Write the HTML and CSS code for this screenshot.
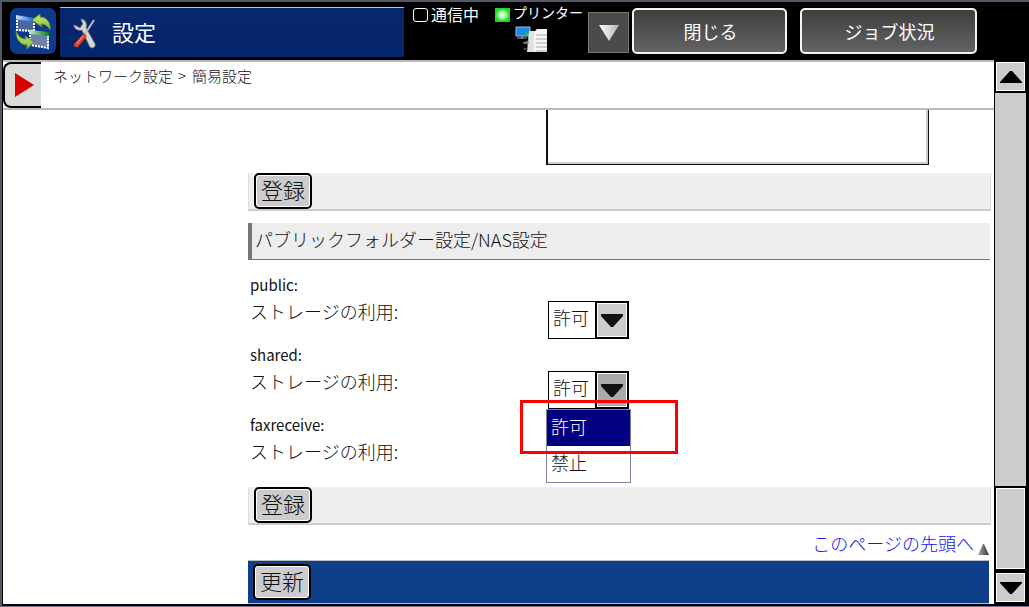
FILE: index.html
```
<!DOCTYPE html>
<html lang="ja">
<head>
    <meta charset="UTF-8">
    <meta name="viewport" content="width=device-width, initial-scale=1.0">
    <title>設定</title>
    <link rel="stylesheet" href="styles.css">
</head>
<body>
    <div class="screen">
        <header class="topbar">
            <div class="logo">
                <svg width="46" height="46" viewBox="0 0 46 46">
                    <defs>
                        <linearGradient id="leaf" x1="0" y1="0" x2="0" y2="1">
                            <stop offset="0" stop-color="#cfe87a"/>
                            <stop offset="1" stop-color="#86b83a"/>
                        </linearGradient>
                        <linearGradient id="blue-bar" x1="0" y1="0" x2="1" y2="0">
                            <stop offset="0" stop-color="#cfe2fb"/>
                            <stop offset="1" stop-color="#1a66dc"/>
                        </linearGradient>
                        <linearGradient id="green-bar" x1="0" y1="0" x2="1" y2="0">
                            <stop offset="0" stop-color="#c8e8cc"/>
                            <stop offset="1" stop-color="#0a7a22"/>
                        </linearGradient>
                    </defs>
                    <path d="M6 8l18 3v13L7 23z" fill="#4c66a0"/>
                    <path d="M7 12v10l17 1V12" fill="none" stroke="#fff" stroke-width="2" stroke-dasharray="2 1"/>
                    <path d="M6 7l18 3v4L6 11z" fill="url(#blue-bar)"/>
                    <path d="M20 24l19 2v14l-18-3z" fill="#6f82ae"/>
                    <path d="M20 27v10l18 3V27" fill="none" stroke="#fff" stroke-width="2" stroke-dasharray="2 1"/>
                    <path d="M19 22l20 2v4l-20-2z" fill="url(#green-bar)"/>
                    <path d="M22 12l8-6v3c7 0 11 6 10 13-2-4-5-6-9-6l1 3z" fill="url(#leaf)" stroke="#5b8f2a" stroke-width="1"/>
                    <path d="M6 23c2 5 5 8 10 8l-1-3 9 6-7 7v-4c-7 0-11-6-11-14z" fill="url(#leaf)" stroke="#5b8f2a" stroke-width="1"/>
                </svg>
            </div>
            <div class="title-bar">
                <svg width="24" height="32" viewBox="0 0 24 32">
                    <path d="M1 8c0 3 3 6 8 5l8 17c2 2 6 0 5-3L13 11c1-4 0-8-5-9l2 5-3 4z" fill="#d8d8d8" stroke="#888"/>
                    <path d="M21 3L12 17" stroke="#bbb" stroke-width="2"/>
                    <path d="M11 16l3 3-9 11c-2 1-5-1-4-3z" fill="#e0402c"/>
                    <path d="M10 19L4 27" stroke="#ff9d86"/>
                </svg>
                <h1>設定</h1>
            </div>
            <div class="status">
                <span class="lamp"></span>
                <span class="status-text">通信中</span>
            </div>
            <div class="printer">
                <div class="status">
                    <span class="lamp lamp-on"></span>
                    <span class="printer-text">プリンター</span>
                </div>
                <svg class="printer-icon" width="33" height="27" viewBox="0 0 33 27">
                    <rect x="1" y="1" width="14" height="9" fill="#188be5" stroke="#8dbde5"/>
                    <path d="M7 10v3M2 12h10" stroke="#aaa"/>
                    <path d="M9 6l2 1 3 1v4z" fill="#21d629"/>
                    <path d="M14 5h6v21h-8z" fill="#e2e2e6"/>
                    <path d="M8 17l5-2v3zM8 23h5" fill="#777" stroke="#777"/>
                    <path d="M19 6l3-3h10v23H19z" fill="#f5f5f5"/>
                    <path d="M21 9h11M21 13h11M21 17h11M21 21h11M21 25h11" stroke="#aaa"/>
                </svg>
            </div>
            <button class="drop-button" aria-label="メニュー">
                <svg width="20" height="16" viewBox="0 0 20 16">
                    <defs>
                        <linearGradient id="silver" x1="0" y1="0" x2="1" y2="0">
                            <stop offset="0" stop-color="#fff"/>
                            <stop offset="1" stop-color="#b4b4b4"/>
                        </linearGradient>
                    </defs>
                    <path d="M0 0h20L10 16z" fill="url(#silver)"/>
                </svg>
            </button>
            <button class="top-button close-button">閉じる</button>
            <button class="top-button job-button">ジョブ状況</button>
        </header>

        <div class="body">
            <main class="panel">
                <nav class="breadcrumb">
                    <button class="menu-toggle" aria-label="メニューを開く">
                        <svg width="19" height="24" viewBox="0 0 19 24"><path d="M0 0l19 12L0 24z" fill="#d90000"/></svg>
                    </button>
                    <p>ネットワーク設定<span class="separator">&gt;</span>簡易設定</p>
                </nav>

                <div class="content">
                    <textarea class="note" aria-label="コメント"></textarea>
                    <div class="action-bar"><button class="button">登録</button></div>

                    <h2>パブリックフォルダー設定/NAS設定</h2>

                    <div class="fields">
                        <div class="field">
                            <p class="folder">public:</p>
                            <label for="public-storage">ストレージの利用:</label>
                            <div class="select-box">
                                <select id="public-storage">
                                    <option>許可</option>
                                    <option>禁止</option>
                                </select>
                                <span class="arrow"><svg width="24" height="13" viewBox="0 0 24 13"><path d="M1 0h22v2L13 13h-2L1 2z" fill="#111"/></svg></span>
                            </div>
                        </div>
                        <div class="field">
                            <p class="folder">shared:</p>
                            <label for="shared-storage">ストレージの利用:</label>
                            <div class="select-box open">
                                <select id="shared-storage">
                                    <option>許可</option>
                                    <option>禁止</option>
                                </select>
                                <span class="arrow"><svg width="24" height="13" viewBox="0 0 24 13"><path d="M1 0h22v2L13 13h-2L1 2z" fill="#111"/></svg></span>
                                <ul class="options" role="listbox">
                                    <li class="selected" role="option" aria-selected="true">許可</li>
                                    <li role="option">禁止</li>
                                </ul>
                                <div class="marker"></div>
                            </div>
                        </div>
                        <div class="field">
                            <p class="folder">faxreceive:</p>
                            <p>ストレージの利用:</p>
                        </div>
                    </div>

                    <div class="action-bar"><button class="button">登録</button></div>

                    <div class="to-top">
                        <a href="#">このページの先頭へ</a>
                        <svg width="11" height="11" viewBox="0 0 11 11">
                            <defs>
                                <linearGradient id="grey" x1="0" y1="0" x2="1" y2="0">
                                    <stop offset="0" stop-color="#aaa"/>
                                    <stop offset="1" stop-color="#333"/>
                                </linearGradient>
                            </defs>
                            <path d="M5 0h1l5 11H0z" fill="url(#grey)"/>
                        </svg>
                    </div>

                    <div class="update-bar"><button class="button">更新</button></div>
                </div>
            </main>

            <div class="scrollbar">
                <button class="scroll-button" aria-label="上へ">
                    <svg width="22" height="12" viewBox="0 0 22 12"><path d="M10 0h2l10 11v1H0v-1z" fill="#000"/></svg>
                </button>
                <div class="track"></div>
                <div class="thumb"></div>
                <button class="scroll-button" aria-label="下へ">
                    <svg width="22" height="12" viewBox="0 0 22 12"><path d="M0 0h22v1L12 12h-2L0 1z" fill="#000"/></svg>
                </button>
            </div>
        </div>
    </div>
</body>
</html>
```
FILE: styles.css
```
* {
    box-sizing: border-box;
}
body {
    margin: 0;
    font-family: "Noto Sans CJK JP", sans-serif;
    font-size: 18px;
    font-weight: 300;
    color: #111;
}
h1, h2, p, ul {
    margin: 0;
    padding: 0;
    font-weight: 300;
}
button, select, textarea {
    margin: 0;
    padding: 0;
    font-family: inherit;
    font-weight: 300;
    color: inherit;
}
svg {
    display: block;
}
.screen {
    display: flex;
    flex-direction: column;
    min-height: 100vh;
    background: #000;
    border-top: 2px solid #555866;
    border-left: 2px solid #555866;
    border-bottom: 1px solid #77758c;
}

/* 上部バー */
.topbar {
    display: flex;
    align-items: flex-start;
    height: 58px;
    padding: 5px 52px 0 8px;
    color: #fff;
}
.logo {
    margin: 1px 4px 0 0;
    background: #0d3a8c;
    border-radius: 7px;
}
.title-bar {
    flex: 1;
    display: flex;
    align-items: center;
    gap: 15px;
    height: 50px;
    padding-left: 13px;
    background: linear-gradient(#08276f, #04246c);
    border-top: 1px solid #b4bedd;
}
h1 {
    padding-bottom: 4px;
    font-size: 22px;
    font-weight: 400;
    line-height: 32px;
}
.status {
    display: flex;
    align-items: center;
    gap: 3px;
    height: 15px;
    margin-left: 9px;
    line-height: 15px;
}
.status-text {
    font-size: 16px;
    font-weight: 400;
}
.printer-text {
    padding-bottom: 4px;
    font-size: 14px;
    font-weight: 400;
}
.lamp {
    width: 15px;
    height: 14px;
    border: 1px solid #fff;
    border-radius: 3px;
}
.lamp-on {
    border: 1px solid #1ddb2a;
    border-radius: 0;
    background: radial-gradient(#fff, #8cf58c 45%, #1bdd22 75%);
}
.printer {
    margin: 0 5px 0 7px;
}
.printer-icon {
    margin: 4px 0 0 29px;
}
.drop-button {
    display: flex;
    align-items: center;
    justify-content: center;
    width: 41px;
    height: 41px;
    margin: 5px 3px 0 0;
    background: #4b4b4b;
    border: 1px solid #777;
}
.top-button {
    height: 46px;
    margin-top: 1px;
    padding-left: 2px;
    background: linear-gradient(#3e3e3e, #636363);
    border: 2px solid #f4f4f4;
    border-radius: 5px;
    font-size: 18px;
    font-weight: 400;
}
.close-button {
    width: 155px;
    margin-right: 13px;
}
.job-button {
    width: 177px;
}

/* 本文 */
.body {
    flex: 1;
    display: flex;
    padding: 0 0 2px 1px;
}
.panel {
    flex: 1;
    background: #fff;
    border-top: 2px solid #bbb;
}
.breadcrumb {
    display: flex;
    height: 48px;
    border-bottom: 2px solid #bbb;
    font-size: 15px;
    line-height: 28px;
}
.separator {
    margin: 0 6px 0 5px;
}
.menu-toggle {
    display: flex;
    align-items: center;
    width: 38px;
    height: 46px;
    margin-right: 12px;
    padding-left: 10px;
    background: #d9dcd9;
    border: 2px solid #000;
    border-right: 0;
    border-radius: 8px 0 0 8px;
}
.content {
    padding: 0 3px 0 245px;
}
.note {
    display: block;
    width: 383px;
    height: 55px;
    margin: 0 0 8px 298px;
    background: #fff;
    border: 1px solid #111;
    border-width: 0 1px 1px 2px;
    box-shadow: inset -2px -2px #ccc;
    resize: none;
}
.action-bar {
    height: 38px;
    padding-left: 5px;
    background: #efefef;
    border: 1px solid #ddd;
    border-width: 0 1px 2px;
    border-bottom-color: #ccc;
}
.button {
    display: block;
    width: 58px;
    height: 36px;
    padding-bottom: 4px;
    background: #ccc;
    border: 2px solid #000;
    border-radius: 5px;
    box-shadow: inset 0 0 0 1px #fff;
    font-size: 22px;
    line-height: 28px;
}
h2 {
    height: 37px;
    margin: 12px 1px 12px 0;
    padding-left: 3px;
    background: #ededed;
    border-left: 4px solid #777;
    border-bottom: 1px solid #777;
    font-size: 18px;
    line-height: 32px;
}
.fields {
    padding: 0 2px 5px;
}
.field {
    display: grid;
    grid-template-columns: 298px 1fr;
    grid-template-rows: 27px 43px;
    line-height: 25px;
}
.folder {
    grid-column: 1 / 3;
    font-size: 15px;
    font-weight: 400;
}
.select-box {
    position: relative;
    display: flex;
    width: 81px;
    height: 38px;
    margin-top: 2px;
}
select {
    appearance: none;
    width: 100%;
    padding: 0 34px 6px 4px;
    background: #fff;
    border: 1px solid #000;
    border-radius: 0;
    font-size: 18px;
}
.arrow {
    position: absolute;
    top: 0;
    right: 0;
    display: flex;
    align-items: center;
    justify-content: center;
    width: 34px;
    height: 38px;
    background: #ccc;
    border: 2px solid #000;
    box-shadow: inset 0 0 0 1px #fff;
    pointer-events: none;
}
.open .arrow {
    background: #aaa;
}
.options {
    position: absolute;
    top: 38px;
    left: -2px;
    width: 85px;
    background: #fff;
    border: 1px solid #8480a0;
    list-style: none;
    line-height: 32px;
}
.options li {
    height: 36px;
    padding-left: 4px;
}
.options .selected {
    background: #000080;
    color: #fff;
}
/* 選択箇所の赤枠 */
.marker {
    position: absolute;
    top: 29px;
    left: -28px;
    width: 158px;
    height: 54px;
    border: 3px solid #f00;
    pointer-events: none;
}
.to-top {
    display: flex;
    align-items: flex-end;
    justify-content: flex-end;
    gap: 4px;
    height: 30px;
    margin-bottom: 5px;
    padding-right: 2px;
}
.to-top a {
    color: #1414f0;
    line-height: 24px;
    text-decoration: none;
}
.update-bar {
    height: 44px;
    margin-right: 2px;
    padding: 3px 0 0 5px;
    background: #0f3f8a;
    border-top: 1px solid #bbb;
    border-bottom: 1px solid #bbb;
}

/* スクロールバー */
.scrollbar {
    display: flex;
    flex-direction: column;
    width: 35px;
    padding: 2px 3px 0 1px;
}
.scroll-button {
    display: flex;
    align-items: center;
    justify-content: center;
    height: 29px;
    margin: 0 1px;
    background: #ccc;
    border: 1px solid #fff;
}
.track {
    flex: 1;
    margin: 2px 0;
    background: #ccc;
}
.thumb {
    height: 81px;
    margin: 0 1px 4px;
    background: #ccc;
    border: 1px solid #fff;
}
.scroll-button:last-child {
    margin-bottom: 2px;
}
```
